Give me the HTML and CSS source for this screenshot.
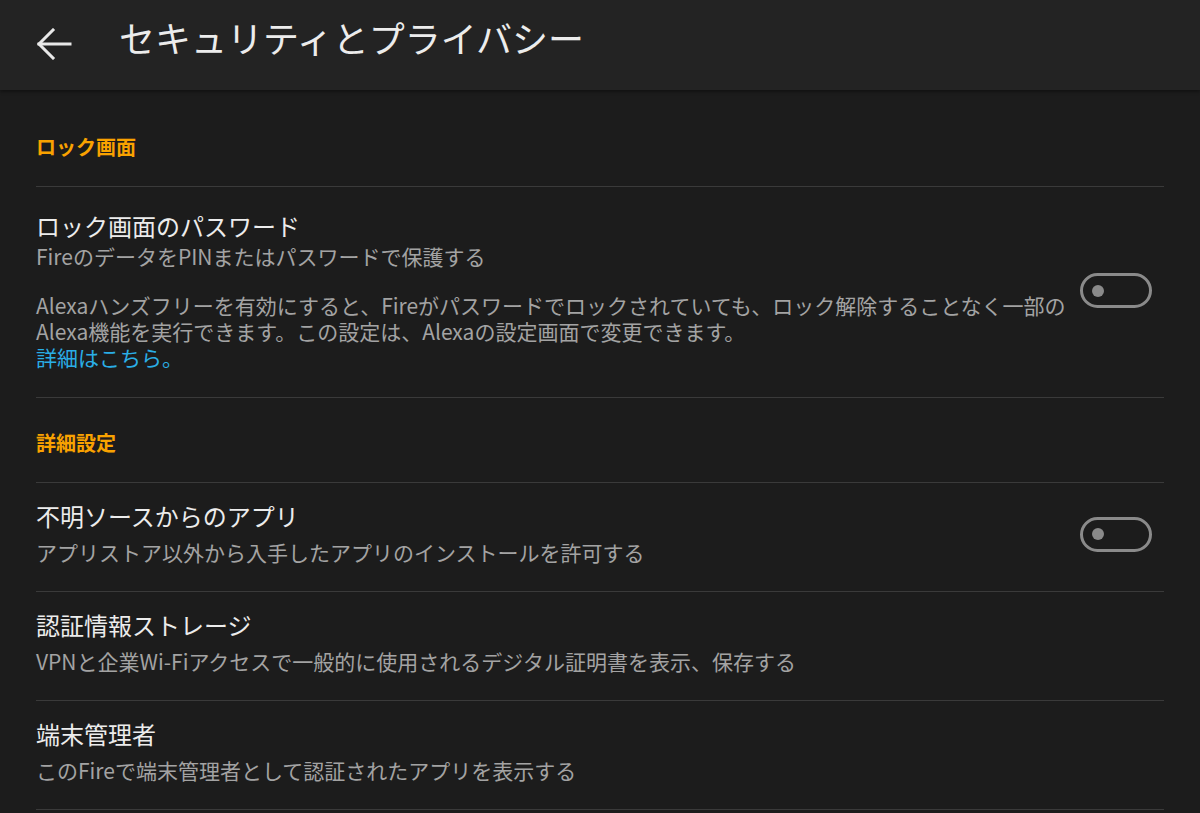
FILE: index.html
```html
<!DOCTYPE html>
<html lang="ja">
<head>
<meta charset="utf-8">
<title>セキュリティとプライバシー</title>
<link rel="stylesheet" href="styles.css">
</head>
<body>
<header class="appbar">
  <span class="back" aria-label="戻る">
    <svg width="36" height="32" viewBox="0 0 36 32" fill="none" stroke="#e8e8e8" stroke-width="3" stroke-linecap="square">
      <path d="M3 16 H34"/>
      <path d="M17 2 L3 16 L17 30"/>
    </svg>
  </span>
  <h1 class="appbar-title">セキュリティとプライバシー</h1>
</header>
<main class="list">
  <div class="section">ロック画面</div>
  <div class="item item-lock">
    <div class="item-text">
      <div class="title">ロック画面のパスワード</div>
      <div class="summary">FireのデータをPINまたはパスワードで保護する</div>
      <div class="note">
        <div class="note-line">Alexaハンズフリーを有効にすると、Fireがパスワードでロックされていても、ロック解除することなく一部の</div>
        <div class="note-line">Alexa機能を実行できます。この設定は、Alexaの設定画面で変更できます。</div>
        <div class="note-line"><a class="link" href="#">詳細はこちら。</a></div>
      </div>
    </div>
    <span class="switch"><span class="knob"></span></span>
  </div>
  <div class="section">詳細設定</div>
  <div class="item">
    <div class="item-text">
      <div class="title">不明ソースからのアプリ</div>
      <div class="summary">アプリストア以外から入手したアプリのインストールを許可する</div>
    </div>
    <span class="switch"><span class="knob"></span></span>
  </div>
  <div class="item">
    <div class="item-text">
      <div class="title">認証情報ストレージ</div>
      <div class="summary">VPNと企業Wi-Fiアクセスで一般的に使用されるデジタル証明書を表示、保存する</div>
    </div>
  </div>
  <div class="item">
    <div class="item-text">
      <div class="title">端末管理者</div>
      <div class="summary">このFireで端末管理者として認証されたアプリを表示する</div>
    </div>
  </div>
</main>
</body>
</html>
```
FILE: styles.css
```css
html, body {
  margin: 0;
  padding: 0;
  background: #1c1c1c;
  font-family: "Noto Sans CJK JP", "Noto Sans", sans-serif;
  color: #ececec;
  height: 813px;
  overflow: hidden;
}

.appbar {
  height: 90px;
  background: #232323;
  display: flex;
  align-items: center;
  padding-left: 36px;
  box-sizing: border-box;
  box-shadow: 0 2px 3px rgba(0, 0, 0, 0.35);
  position: relative;
  z-index: 1;
}

.back {
  display: flex;
  width: 36px;
  height: 32px;
  margin-bottom: 2px;
}

.appbar-title {
  margin: 0 0 16px 47px;
  font-size: 36px;
  font-weight: 400;
  line-height: 40px;
  color: #ececec;
}

.list {
  padding: 12px 36px 0;
}

.section {
  padding: 31px 0 25px;
  line-height: 28px;
  font-size: 20px;
  font-weight: 700;
  color: #f9a200;
  border-bottom: 1px solid #3a3a3a;
}

.item {
  display: flex;
  align-items: center;
  border-bottom: 1px solid #3a3a3a;
  padding: 18px 0 24px;
}

.item-text {
  flex: 1;
  min-width: 0;
}

.title {
  font-size: 24px;
  line-height: 30px;
  color: #ececec;
}

.summary {
  font-size: 21px;
  line-height: 30px;
  margin-top: 6px;
  color: #a3a3a3;
  white-space: nowrap;
}

.item-lock {
  padding-top: 24px;
  padding-bottom: 27px;
}

.item-lock .summary {
  margin-top: 0;
}

.note {
  margin-top: 21px;
  font-size: 21px;
  color: #a3a3a3;
  white-space: nowrap;
}

.note-line {
  height: 26px;
  line-height: 26px;
}

.link {
  color: #2aaee6;
  text-decoration: none;
}

.switch {
  flex: none;
  width: 72px;
  height: 35px;
  box-sizing: border-box;
  border: 3px solid #8a8a8a;
  border-radius: 18px;
  margin-right: 12px;
  display: flex;
  align-items: center;
  padding-left: 9px;
}

.knob {
  width: 12px;
  height: 12px;
  border-radius: 50%;
  background: #8a8a8a;
}
```
